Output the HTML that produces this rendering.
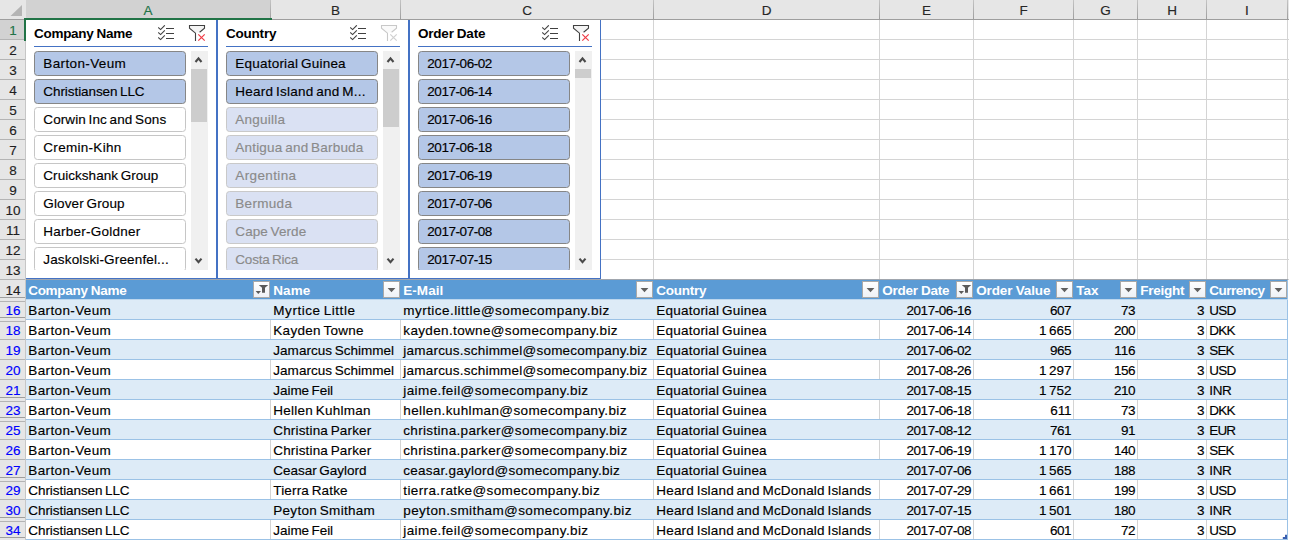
<!DOCTYPE html>
<html lang="en"><head><meta charset="utf-8"><title>Slicers</title>
<style>
html,body{margin:0;padding:0}
body{width:1289px;height:540px;position:relative;overflow:hidden;background:#fff;font-family:"Liberation Sans",sans-serif;font-size:13.5px;color:#000}
#g div,#g svg,#t span{position:absolute;display:block}
#t span{line-height:20px;height:20px;white-space:pre;word-spacing:-1.2px;-webkit-text-stroke:0.15px}
</style></head><body>
<div id="g">
<div style="left:26px;top:39px;width:1263px;height:1px;background:#d4d4d4;"></div>
<div style="left:26px;top:59px;width:1263px;height:1px;background:#d4d4d4;"></div>
<div style="left:26px;top:79px;width:1263px;height:1px;background:#d4d4d4;"></div>
<div style="left:26px;top:99px;width:1263px;height:1px;background:#d4d4d4;"></div>
<div style="left:26px;top:119px;width:1263px;height:1px;background:#d4d4d4;"></div>
<div style="left:26px;top:139px;width:1263px;height:1px;background:#d4d4d4;"></div>
<div style="left:26px;top:159px;width:1263px;height:1px;background:#d4d4d4;"></div>
<div style="left:26px;top:179px;width:1263px;height:1px;background:#d4d4d4;"></div>
<div style="left:26px;top:199px;width:1263px;height:1px;background:#d4d4d4;"></div>
<div style="left:26px;top:219px;width:1263px;height:1px;background:#d4d4d4;"></div>
<div style="left:26px;top:239px;width:1263px;height:1px;background:#d4d4d4;"></div>
<div style="left:26px;top:259px;width:1263px;height:1px;background:#d4d4d4;"></div>
<div style="left:26px;top:279px;width:1263px;height:1px;background:#d4d4d4;"></div>
<div style="left:270px;top:20px;width:1px;height:260px;background:#d4d4d4;"></div>
<div style="left:400px;top:20px;width:1px;height:260px;background:#d4d4d4;"></div>
<div style="left:653px;top:20px;width:1px;height:260px;background:#d4d4d4;"></div>
<div style="left:879px;top:20px;width:1px;height:260px;background:#d4d4d4;"></div>
<div style="left:973px;top:20px;width:1px;height:260px;background:#d4d4d4;"></div>
<div style="left:1073px;top:20px;width:1px;height:260px;background:#d4d4d4;"></div>
<div style="left:1137px;top:20px;width:1px;height:260px;background:#d4d4d4;"></div>
<div style="left:1206px;top:20px;width:1px;height:260px;background:#d4d4d4;"></div>
<div style="left:1287px;top:20px;width:1px;height:260px;background:#d4d4d4;"></div>
<div style="left:0px;top:0px;width:1289px;height:19px;background:#e6e6e6;"></div>
<div style="left:0px;top:19px;width:1289px;height:1px;background:#9e9e9e;"></div>
<div style="left:26px;top:0px;width:245px;height:18px;background:#d2d2d2;"></div>
<div style="left:270px;top:0px;width:1px;height:20px;background:linear-gradient(#c4c4c4,#9c9c9c);"></div>
<div style="left:400px;top:0px;width:1px;height:20px;background:linear-gradient(#c4c4c4,#9c9c9c);"></div>
<div style="left:653px;top:0px;width:1px;height:20px;background:linear-gradient(#c4c4c4,#9c9c9c);"></div>
<div style="left:879px;top:0px;width:1px;height:20px;background:linear-gradient(#c4c4c4,#9c9c9c);"></div>
<div style="left:973px;top:0px;width:1px;height:20px;background:linear-gradient(#c4c4c4,#9c9c9c);"></div>
<div style="left:1073px;top:0px;width:1px;height:20px;background:linear-gradient(#c4c4c4,#9c9c9c);"></div>
<div style="left:1137px;top:0px;width:1px;height:20px;background:linear-gradient(#c4c4c4,#9c9c9c);"></div>
<div style="left:1206px;top:0px;width:1px;height:20px;background:linear-gradient(#c4c4c4,#9c9c9c);"></div>
<div style="left:1287px;top:0px;width:1px;height:20px;background:linear-gradient(#c4c4c4,#9c9c9c);"></div>
<svg style="left:9px;top:4px" width="14" height="13" viewBox="0 0 14 13"><path d="M13 1 L13 12 L1.5 12 Z" fill="#b4b4b4"/></svg>
<div style="left:0px;top:20px;width:25px;height:520px;background:#e6e6e6;"></div>
<div style="left:25px;top:20px;width:1px;height:520px;background:#c6c6c6;"></div>
<div style="left:0px;top:20px;width:25px;height:19px;background:#d2d2d2;"></div>
<div style="left:0px;top:39px;width:25px;height:1px;background:#b4b4b4;"></div>
<div style="left:0px;top:59px;width:25px;height:1px;background:#b4b4b4;"></div>
<div style="left:0px;top:79px;width:25px;height:1px;background:#b4b4b4;"></div>
<div style="left:0px;top:99px;width:25px;height:1px;background:#b4b4b4;"></div>
<div style="left:0px;top:119px;width:25px;height:1px;background:#b4b4b4;"></div>
<div style="left:0px;top:139px;width:25px;height:1px;background:#b4b4b4;"></div>
<div style="left:0px;top:159px;width:25px;height:1px;background:#b4b4b4;"></div>
<div style="left:0px;top:179px;width:25px;height:1px;background:#b4b4b4;"></div>
<div style="left:0px;top:199px;width:25px;height:1px;background:#b4b4b4;"></div>
<div style="left:0px;top:219px;width:25px;height:1px;background:#b4b4b4;"></div>
<div style="left:0px;top:239px;width:25px;height:1px;background:#b4b4b4;"></div>
<div style="left:0px;top:259px;width:25px;height:1px;background:#b4b4b4;"></div>
<div style="left:0px;top:279px;width:25px;height:1px;background:#b4b4b4;"></div>
<div style="left:0px;top:297px;width:25px;height:1px;background:#9e9e9e;"></div>
<div style="left:0px;top:301px;width:25px;height:1px;background:#b4b4b4;"></div>
<div style="left:0px;top:317px;width:25px;height:1px;background:#9e9e9e;"></div>
<div style="left:0px;top:321px;width:25px;height:1px;background:#b4b4b4;"></div>
<div style="left:0px;top:339px;width:25px;height:1px;background:#b4b4b4;"></div>
<div style="left:0px;top:359px;width:25px;height:1px;background:#b4b4b4;"></div>
<div style="left:0px;top:379px;width:25px;height:1px;background:#b4b4b4;"></div>
<div style="left:0px;top:397px;width:25px;height:1px;background:#9e9e9e;"></div>
<div style="left:0px;top:401px;width:25px;height:1px;background:#b4b4b4;"></div>
<div style="left:0px;top:417px;width:25px;height:1px;background:#9e9e9e;"></div>
<div style="left:0px;top:421px;width:25px;height:1px;background:#b4b4b4;"></div>
<div style="left:0px;top:439px;width:25px;height:1px;background:#b4b4b4;"></div>
<div style="left:0px;top:459px;width:25px;height:1px;background:#b4b4b4;"></div>
<div style="left:0px;top:477px;width:25px;height:1px;background:#9e9e9e;"></div>
<div style="left:0px;top:481px;width:25px;height:1px;background:#b4b4b4;"></div>
<div style="left:0px;top:499px;width:25px;height:1px;background:#b4b4b4;"></div>
<div style="left:0px;top:517px;width:25px;height:1px;background:#9e9e9e;"></div>
<div style="left:0px;top:521px;width:25px;height:1px;background:#b4b4b4;"></div>
<div style="left:0px;top:537px;width:25px;height:1px;background:#9e9e9e;"></div>
<div style="left:0px;top:541px;width:25px;height:1px;background:#b4b4b4;"></div>
<div style="left:24px;top:18px;width:248px;height:2px;background:#217346;"></div>
<div style="left:24px;top:18px;width:2px;height:23px;background:#217346;"></div>
<div style="left:26px;top:20px;width:190px;height:258px;background:#fff;"></div>
<div style="left:216px;top:20px;width:1px;height:259px;background:#4472c4;"></div>
<div style="left:26px;top:278px;width:191px;height:1px;background:#4472c4;"></div>
<div style="left:34px;top:46px;width:174px;height:1px;background:#4472c4;"></div>
<svg style="left:158px;top:25px" width="17" height="16" viewBox="0 0 17 16"><path d="M0.2 2.5 L2.6 4.6 L6.8 0.30000000000000027" fill="none" stroke="#404040" stroke-width="1.1"/><rect x="8" y="3" width="8" height="1" fill="#404040"/><path d="M0.2 7.5 L2.6 9.6 L6.8 5.300000000000001" fill="none" stroke="#404040" stroke-width="1.1"/><rect x="8" y="8" width="8" height="1" fill="#404040"/><path d="M0.2 12.5 L2.6 14.6 L6.8 10.299999999999999" fill="none" stroke="#404040" stroke-width="1.1"/><rect x="8" y="13" width="8" height="1" fill="#404040"/></svg>
<svg style="left:188px;top:24px" width="18" height="18" viewBox="0 0 18 18"><path d="M1.5 1.5 L16.5 1.5 L16.5 4 L11 8.6 L7.5 8.6 L1.5 4 Z" fill="#f4f4f4" stroke="none"/><path d="M7.5 17 L7.5 9.2 L1.5 4.2 L1.5 1.5 L16.5 1.5 L16.5 4.2 L11.6 8.2" fill="none" stroke="#404040" stroke-width="1.1"/><path d="M10.3 10.3 L16.7 16.7 M16.7 10.3 L10.3 16.7" fill="none" stroke="#f03c46" stroke-width="1.2"/></svg>
<div style="left:191px;top:51px;width:17px;height:219px;background:#f0f0f0;"></div>
<div style="left:191px;top:69px;width:16px;height:53px;background:#cdcdcd;"></div>
<svg style="left:194px;top:56px" width="9" height="8" viewBox="0 0 9 8"><path d="M1.5 6 L4.5 2.4 L7.5 6" fill="none" stroke="#4a4a4a" stroke-width="2.1"/></svg>
<svg style="left:194px;top:257px" width="9" height="8" viewBox="0 0 9 8"><path d="M1.5 1.6 L4.5 5.2 L7.5 1.6" fill="none" stroke="#4a4a4a" stroke-width="2.1"/></svg>
<div style="left:34px;top:51px;width:150px;height:23px;background:#b4c7e7;border:1px solid #868686;border-radius:3.5px"></div>
<div style="left:34px;top:79px;width:150px;height:23px;background:#b4c7e7;border:1px solid #868686;border-radius:3.5px"></div>
<div style="left:34px;top:107px;width:150px;height:23px;background:#ffffff;border:1px solid #c6c6c6;border-radius:3.5px"></div>
<div style="left:34px;top:135px;width:150px;height:23px;background:#ffffff;border:1px solid #c6c6c6;border-radius:3.5px"></div>
<div style="left:34px;top:163px;width:150px;height:23px;background:#ffffff;border:1px solid #c6c6c6;border-radius:3.5px"></div>
<div style="left:34px;top:191px;width:150px;height:23px;background:#ffffff;border:1px solid #c6c6c6;border-radius:3.5px"></div>
<div style="left:34px;top:219px;width:150px;height:23px;background:#ffffff;border:1px solid #c6c6c6;border-radius:3.5px"></div>
<div style="left:34px;top:247px;width:152px;height:23px;overflow:hidden"><div style="left:0;top:0;width:150px;height:23px;background:#ffffff;border:1px solid #c6c6c6;border-radius:3.5px"></div></div>
<div style="left:218px;top:20px;width:190px;height:258px;background:#fff;"></div>
<div style="left:217px;top:20px;width:1px;height:259px;background:#4472c4;"></div>
<div style="left:408px;top:20px;width:1px;height:259px;background:#4472c4;"></div>
<div style="left:217px;top:278px;width:192px;height:1px;background:#4472c4;"></div>
<div style="left:226px;top:46px;width:174px;height:1px;background:#4472c4;"></div>
<svg style="left:350px;top:25px" width="17" height="16" viewBox="0 0 17 16"><path d="M0.2 2.5 L2.6 4.6 L6.8 0.30000000000000027" fill="none" stroke="#404040" stroke-width="1.1"/><rect x="8" y="3" width="8" height="1" fill="#404040"/><path d="M0.2 7.5 L2.6 9.6 L6.8 5.300000000000001" fill="none" stroke="#404040" stroke-width="1.1"/><rect x="8" y="8" width="8" height="1" fill="#404040"/><path d="M0.2 12.5 L2.6 14.6 L6.8 10.299999999999999" fill="none" stroke="#404040" stroke-width="1.1"/><rect x="8" y="13" width="8" height="1" fill="#404040"/></svg>
<svg style="left:380px;top:24px" width="18" height="18" viewBox="0 0 18 18"><path d="M1.5 1.5 L16.5 1.5 L16.5 4 L11 8.6 L7.5 8.6 L1.5 4 Z" fill="#fafafa" stroke="none"/><path d="M7.5 17 L7.5 9.2 L1.5 4.2 L1.5 1.5 L16.5 1.5 L16.5 4.2 L11.6 8.2" fill="none" stroke="#c8c8c8" stroke-width="1.1"/><path d="M10.3 10.3 L16.7 16.7 M16.7 10.3 L10.3 16.7" fill="none" stroke="#d0d0d0" stroke-width="1.2"/></svg>
<div style="left:383px;top:51px;width:17px;height:219px;background:#f0f0f0;"></div>
<div style="left:383px;top:69px;width:16px;height:58px;background:#cdcdcd;"></div>
<svg style="left:386px;top:56px" width="9" height="8" viewBox="0 0 9 8"><path d="M1.5 6 L4.5 2.4 L7.5 6" fill="none" stroke="#4a4a4a" stroke-width="2.1"/></svg>
<svg style="left:386px;top:257px" width="9" height="8" viewBox="0 0 9 8"><path d="M1.5 1.6 L4.5 5.2 L7.5 1.6" fill="none" stroke="#4a4a4a" stroke-width="2.1"/></svg>
<div style="left:226px;top:51px;width:150px;height:23px;background:#b4c7e7;border:1px solid #868686;border-radius:3.5px"></div>
<div style="left:226px;top:79px;width:150px;height:23px;background:#b4c7e7;border:1px solid #868686;border-radius:3.5px"></div>
<div style="left:226px;top:107px;width:150px;height:23px;background:#dae1f3;border:1px solid #c9c9c9;border-radius:3.5px"></div>
<div style="left:226px;top:135px;width:150px;height:23px;background:#dae1f3;border:1px solid #c9c9c9;border-radius:3.5px"></div>
<div style="left:226px;top:163px;width:150px;height:23px;background:#dae1f3;border:1px solid #c9c9c9;border-radius:3.5px"></div>
<div style="left:226px;top:191px;width:150px;height:23px;background:#dae1f3;border:1px solid #c9c9c9;border-radius:3.5px"></div>
<div style="left:226px;top:219px;width:150px;height:23px;background:#dae1f3;border:1px solid #c9c9c9;border-radius:3.5px"></div>
<div style="left:226px;top:247px;width:152px;height:23px;overflow:hidden"><div style="left:0;top:0;width:150px;height:23px;background:#dae1f3;border:1px solid #c9c9c9;border-radius:3.5px"></div></div>
<div style="left:410px;top:20px;width:190px;height:258px;background:#fff;"></div>
<div style="left:409px;top:20px;width:1px;height:259px;background:#4472c4;"></div>
<div style="left:600px;top:20px;width:1px;height:259px;background:#4472c4;"></div>
<div style="left:409px;top:278px;width:192px;height:1px;background:#4472c4;"></div>
<div style="left:418px;top:46px;width:174px;height:1px;background:#4472c4;"></div>
<svg style="left:542px;top:25px" width="17" height="16" viewBox="0 0 17 16"><path d="M0.2 2.5 L2.6 4.6 L6.8 0.30000000000000027" fill="none" stroke="#404040" stroke-width="1.1"/><rect x="8" y="3" width="8" height="1" fill="#404040"/><path d="M0.2 7.5 L2.6 9.6 L6.8 5.300000000000001" fill="none" stroke="#404040" stroke-width="1.1"/><rect x="8" y="8" width="8" height="1" fill="#404040"/><path d="M0.2 12.5 L2.6 14.6 L6.8 10.299999999999999" fill="none" stroke="#404040" stroke-width="1.1"/><rect x="8" y="13" width="8" height="1" fill="#404040"/></svg>
<svg style="left:572px;top:24px" width="18" height="18" viewBox="0 0 18 18"><path d="M1.5 1.5 L16.5 1.5 L16.5 4 L11 8.6 L7.5 8.6 L1.5 4 Z" fill="#f4f4f4" stroke="none"/><path d="M7.5 17 L7.5 9.2 L1.5 4.2 L1.5 1.5 L16.5 1.5 L16.5 4.2 L11.6 8.2" fill="none" stroke="#404040" stroke-width="1.1"/><path d="M10.3 10.3 L16.7 16.7 M16.7 10.3 L10.3 16.7" fill="none" stroke="#f03c46" stroke-width="1.2"/></svg>
<div style="left:575px;top:51px;width:17px;height:219px;background:#f0f0f0;"></div>
<div style="left:575px;top:69px;width:16px;height:9px;background:#cdcdcd;"></div>
<svg style="left:578px;top:56px" width="9" height="8" viewBox="0 0 9 8"><path d="M1.5 6 L4.5 2.4 L7.5 6" fill="none" stroke="#4a4a4a" stroke-width="2.1"/></svg>
<svg style="left:578px;top:257px" width="9" height="8" viewBox="0 0 9 8"><path d="M1.5 1.6 L4.5 5.2 L7.5 1.6" fill="none" stroke="#4a4a4a" stroke-width="2.1"/></svg>
<div style="left:418px;top:51px;width:150px;height:23px;background:#b4c7e7;border:1px solid #868686;border-radius:3.5px"></div>
<div style="left:418px;top:79px;width:150px;height:23px;background:#b4c7e7;border:1px solid #868686;border-radius:3.5px"></div>
<div style="left:418px;top:107px;width:150px;height:23px;background:#b4c7e7;border:1px solid #868686;border-radius:3.5px"></div>
<div style="left:418px;top:135px;width:150px;height:23px;background:#b4c7e7;border:1px solid #868686;border-radius:3.5px"></div>
<div style="left:418px;top:163px;width:150px;height:23px;background:#b4c7e7;border:1px solid #868686;border-radius:3.5px"></div>
<div style="left:418px;top:191px;width:150px;height:23px;background:#b4c7e7;border:1px solid #868686;border-radius:3.5px"></div>
<div style="left:418px;top:219px;width:150px;height:23px;background:#b4c7e7;border:1px solid #868686;border-radius:3.5px"></div>
<div style="left:418px;top:247px;width:152px;height:23px;overflow:hidden"><div style="left:0;top:0;width:150px;height:23px;background:#b4c7e7;border:1px solid #868686;border-radius:3.5px"></div></div>
<div style="left:26px;top:279px;width:1262px;height:1px;background:#a0a6ae;"></div>
<div style="left:26px;top:280px;width:1262px;height:19px;background:#5b9bd5;"></div>
<svg style="left:253px;top:281px" width="17" height="17" viewBox="0 0 17 17"><defs><linearGradient id="g253" x1="0" y1="0" x2="0" y2="1"><stop offset="0" stop-color="#ffffff"/><stop offset="1" stop-color="#eef1f6"/></linearGradient></defs><rect x="0.5" y="0.5" width="16" height="16" fill="url(#g253)" stroke="#a9a9a9"/><path d="M5.8 4 L15.2 4 L12 6.8 L12 11.7 L9 11.7 L9 6.8 Z" fill="#5a5a5a"/><path d="M2.6 10 L8 10 L5.3 13 Z" fill="#5a5a5a"/></svg>
<svg style="left:383px;top:281px" width="17" height="17" viewBox="0 0 17 17"><defs><linearGradient id="g383" x1="0" y1="0" x2="0" y2="1"><stop offset="0" stop-color="#ffffff"/><stop offset="1" stop-color="#eef1f6"/></linearGradient></defs><rect x="0.5" y="0.5" width="16" height="16" fill="url(#g383)" stroke="#a9a9a9"/><path d="M4.6 7 L12.4 7 L8.5 11.2 Z" fill="#606060"/></svg>
<svg style="left:636px;top:281px" width="17" height="17" viewBox="0 0 17 17"><defs><linearGradient id="g636" x1="0" y1="0" x2="0" y2="1"><stop offset="0" stop-color="#ffffff"/><stop offset="1" stop-color="#eef1f6"/></linearGradient></defs><rect x="0.5" y="0.5" width="16" height="16" fill="url(#g636)" stroke="#a9a9a9"/><path d="M4.6 7 L12.4 7 L8.5 11.2 Z" fill="#606060"/></svg>
<svg style="left:862px;top:281px" width="17" height="17" viewBox="0 0 17 17"><defs><linearGradient id="g862" x1="0" y1="0" x2="0" y2="1"><stop offset="0" stop-color="#ffffff"/><stop offset="1" stop-color="#eef1f6"/></linearGradient></defs><rect x="0.5" y="0.5" width="16" height="16" fill="url(#g862)" stroke="#a9a9a9"/><path d="M4.6 7 L12.4 7 L8.5 11.2 Z" fill="#606060"/></svg>
<svg style="left:956px;top:281px" width="17" height="17" viewBox="0 0 17 17"><defs><linearGradient id="g956" x1="0" y1="0" x2="0" y2="1"><stop offset="0" stop-color="#ffffff"/><stop offset="1" stop-color="#eef1f6"/></linearGradient></defs><rect x="0.5" y="0.5" width="16" height="16" fill="url(#g956)" stroke="#a9a9a9"/><path d="M5.8 4 L15.2 4 L12 6.8 L12 11.7 L9 11.7 L9 6.8 Z" fill="#5a5a5a"/><path d="M2.6 10 L8 10 L5.3 13 Z" fill="#5a5a5a"/></svg>
<svg style="left:1056px;top:281px" width="17" height="17" viewBox="0 0 17 17"><defs><linearGradient id="g1056" x1="0" y1="0" x2="0" y2="1"><stop offset="0" stop-color="#ffffff"/><stop offset="1" stop-color="#eef1f6"/></linearGradient></defs><rect x="0.5" y="0.5" width="16" height="16" fill="url(#g1056)" stroke="#a9a9a9"/><path d="M4.6 7 L12.4 7 L8.5 11.2 Z" fill="#606060"/></svg>
<svg style="left:1120px;top:281px" width="17" height="17" viewBox="0 0 17 17"><defs><linearGradient id="g1120" x1="0" y1="0" x2="0" y2="1"><stop offset="0" stop-color="#ffffff"/><stop offset="1" stop-color="#eef1f6"/></linearGradient></defs><rect x="0.5" y="0.5" width="16" height="16" fill="url(#g1120)" stroke="#a9a9a9"/><path d="M4.6 7 L12.4 7 L8.5 11.2 Z" fill="#606060"/></svg>
<svg style="left:1189px;top:281px" width="17" height="17" viewBox="0 0 17 17"><defs><linearGradient id="g1189" x1="0" y1="0" x2="0" y2="1"><stop offset="0" stop-color="#ffffff"/><stop offset="1" stop-color="#eef1f6"/></linearGradient></defs><rect x="0.5" y="0.5" width="16" height="16" fill="url(#g1189)" stroke="#a9a9a9"/><path d="M4.6 7 L12.4 7 L8.5 11.2 Z" fill="#606060"/></svg>
<svg style="left:1270px;top:281px" width="17" height="17" viewBox="0 0 17 17"><defs><linearGradient id="g1270" x1="0" y1="0" x2="0" y2="1"><stop offset="0" stop-color="#ffffff"/><stop offset="1" stop-color="#eef1f6"/></linearGradient></defs><rect x="0.5" y="0.5" width="16" height="16" fill="url(#g1270)" stroke="#a9a9a9"/><path d="M4.6 7 L12.4 7 L8.5 11.2 Z" fill="#606060"/></svg>
<div style="left:26px;top:299px;width:1262px;height:1px;background:#9bc2e6;"></div>
<div style="left:26px;top:300px;width:1262px;height:19px;background:#ddebf7;"></div>
<div style="left:26px;top:319px;width:1262px;height:1px;background:#9bc2e6;"></div>
<div style="left:270px;top:320px;width:1px;height:19px;background:#d4d4d4;"></div>
<div style="left:400px;top:320px;width:1px;height:19px;background:#d4d4d4;"></div>
<div style="left:653px;top:320px;width:1px;height:19px;background:#d4d4d4;"></div>
<div style="left:879px;top:320px;width:1px;height:19px;background:#d4d4d4;"></div>
<div style="left:973px;top:320px;width:1px;height:19px;background:#d4d4d4;"></div>
<div style="left:1073px;top:320px;width:1px;height:19px;background:#d4d4d4;"></div>
<div style="left:1137px;top:320px;width:1px;height:19px;background:#d4d4d4;"></div>
<div style="left:1206px;top:320px;width:1px;height:19px;background:#d4d4d4;"></div>
<div style="left:26px;top:339px;width:1262px;height:1px;background:#9bc2e6;"></div>
<div style="left:26px;top:340px;width:1262px;height:19px;background:#ddebf7;"></div>
<div style="left:26px;top:359px;width:1262px;height:1px;background:#9bc2e6;"></div>
<div style="left:270px;top:360px;width:1px;height:19px;background:#d4d4d4;"></div>
<div style="left:400px;top:360px;width:1px;height:19px;background:#d4d4d4;"></div>
<div style="left:653px;top:360px;width:1px;height:19px;background:#d4d4d4;"></div>
<div style="left:879px;top:360px;width:1px;height:19px;background:#d4d4d4;"></div>
<div style="left:973px;top:360px;width:1px;height:19px;background:#d4d4d4;"></div>
<div style="left:1073px;top:360px;width:1px;height:19px;background:#d4d4d4;"></div>
<div style="left:1137px;top:360px;width:1px;height:19px;background:#d4d4d4;"></div>
<div style="left:1206px;top:360px;width:1px;height:19px;background:#d4d4d4;"></div>
<div style="left:26px;top:379px;width:1262px;height:1px;background:#9bc2e6;"></div>
<div style="left:26px;top:380px;width:1262px;height:19px;background:#ddebf7;"></div>
<div style="left:26px;top:399px;width:1262px;height:1px;background:#9bc2e6;"></div>
<div style="left:270px;top:400px;width:1px;height:19px;background:#d4d4d4;"></div>
<div style="left:400px;top:400px;width:1px;height:19px;background:#d4d4d4;"></div>
<div style="left:653px;top:400px;width:1px;height:19px;background:#d4d4d4;"></div>
<div style="left:879px;top:400px;width:1px;height:19px;background:#d4d4d4;"></div>
<div style="left:973px;top:400px;width:1px;height:19px;background:#d4d4d4;"></div>
<div style="left:1073px;top:400px;width:1px;height:19px;background:#d4d4d4;"></div>
<div style="left:1137px;top:400px;width:1px;height:19px;background:#d4d4d4;"></div>
<div style="left:1206px;top:400px;width:1px;height:19px;background:#d4d4d4;"></div>
<div style="left:26px;top:419px;width:1262px;height:1px;background:#9bc2e6;"></div>
<div style="left:26px;top:420px;width:1262px;height:19px;background:#ddebf7;"></div>
<div style="left:26px;top:439px;width:1262px;height:1px;background:#9bc2e6;"></div>
<div style="left:270px;top:440px;width:1px;height:19px;background:#d4d4d4;"></div>
<div style="left:400px;top:440px;width:1px;height:19px;background:#d4d4d4;"></div>
<div style="left:653px;top:440px;width:1px;height:19px;background:#d4d4d4;"></div>
<div style="left:879px;top:440px;width:1px;height:19px;background:#d4d4d4;"></div>
<div style="left:973px;top:440px;width:1px;height:19px;background:#d4d4d4;"></div>
<div style="left:1073px;top:440px;width:1px;height:19px;background:#d4d4d4;"></div>
<div style="left:1137px;top:440px;width:1px;height:19px;background:#d4d4d4;"></div>
<div style="left:1206px;top:440px;width:1px;height:19px;background:#d4d4d4;"></div>
<div style="left:26px;top:459px;width:1262px;height:1px;background:#9bc2e6;"></div>
<div style="left:26px;top:460px;width:1262px;height:19px;background:#ddebf7;"></div>
<div style="left:26px;top:479px;width:1262px;height:1px;background:#9bc2e6;"></div>
<div style="left:270px;top:480px;width:1px;height:19px;background:#d4d4d4;"></div>
<div style="left:400px;top:480px;width:1px;height:19px;background:#d4d4d4;"></div>
<div style="left:653px;top:480px;width:1px;height:19px;background:#d4d4d4;"></div>
<div style="left:879px;top:480px;width:1px;height:19px;background:#d4d4d4;"></div>
<div style="left:973px;top:480px;width:1px;height:19px;background:#d4d4d4;"></div>
<div style="left:1073px;top:480px;width:1px;height:19px;background:#d4d4d4;"></div>
<div style="left:1137px;top:480px;width:1px;height:19px;background:#d4d4d4;"></div>
<div style="left:1206px;top:480px;width:1px;height:19px;background:#d4d4d4;"></div>
<div style="left:26px;top:499px;width:1262px;height:1px;background:#9bc2e6;"></div>
<div style="left:26px;top:500px;width:1262px;height:19px;background:#ddebf7;"></div>
<div style="left:26px;top:519px;width:1262px;height:1px;background:#9bc2e6;"></div>
<div style="left:270px;top:520px;width:1px;height:19px;background:#d4d4d4;"></div>
<div style="left:400px;top:520px;width:1px;height:19px;background:#d4d4d4;"></div>
<div style="left:653px;top:520px;width:1px;height:19px;background:#d4d4d4;"></div>
<div style="left:879px;top:520px;width:1px;height:19px;background:#d4d4d4;"></div>
<div style="left:973px;top:520px;width:1px;height:19px;background:#d4d4d4;"></div>
<div style="left:1073px;top:520px;width:1px;height:19px;background:#d4d4d4;"></div>
<div style="left:1137px;top:520px;width:1px;height:19px;background:#d4d4d4;"></div>
<div style="left:1206px;top:520px;width:1px;height:19px;background:#d4d4d4;"></div>
<div style="left:26px;top:539px;width:1262px;height:1px;background:#9bc2e6;"></div>
<div style="left:1287px;top:280px;width:1px;height:260px;background:#9bc2e6;"></div>
<div style="left:26px;top:299px;width:1262px;height:1px;background:#bdd7ee;"></div>
<svg style="left:1282px;top:534px" width="5" height="5" viewBox="0 0 5 5"><path d="M4 0.8 L4 4 L0.8 4" fill="none" stroke="#3a5fb0" stroke-width="2"/></svg>
</div>
<div id="t">
<span style="top:1px;left:98px;width:100px;text-align:center;color:#217346;">A</span>
<span style="top:1px;left:285.5px;width:100px;text-align:center;color:#262626;">B</span>
<span style="top:1px;left:477px;width:100px;text-align:center;color:#262626;">C</span>
<span style="top:1px;left:716.5px;width:100px;text-align:center;color:#262626;">D</span>
<span style="top:1px;left:876.5px;width:100px;text-align:center;color:#262626;">E</span>
<span style="top:1px;left:973.5px;width:100px;text-align:center;color:#262626;">F</span>
<span style="top:1px;left:1055.5px;width:100px;text-align:center;color:#262626;">G</span>
<span style="top:1px;left:1122px;width:100px;text-align:center;color:#262626;">H</span>
<span style="top:1px;left:1197px;width:100px;text-align:center;color:#262626;">I</span>
<span style="top:21px;left:-37px;width:100px;text-align:center;color:#217346;">1</span>
<span style="top:41px;left:-37px;width:100px;text-align:center;color:#1e1e1e;">2</span>
<span style="top:61px;left:-37px;width:100px;text-align:center;color:#1e1e1e;">3</span>
<span style="top:81px;left:-37px;width:100px;text-align:center;color:#1e1e1e;">4</span>
<span style="top:101px;left:-37px;width:100px;text-align:center;color:#1e1e1e;">5</span>
<span style="top:121px;left:-37px;width:100px;text-align:center;color:#1e1e1e;">6</span>
<span style="top:141px;left:-37px;width:100px;text-align:center;color:#1e1e1e;">7</span>
<span style="top:161px;left:-37px;width:100px;text-align:center;color:#1e1e1e;">8</span>
<span style="top:181px;left:-37px;width:100px;text-align:center;color:#1e1e1e;">9</span>
<span style="top:201px;left:-37px;width:100px;text-align:center;color:#1e1e1e;">10</span>
<span style="top:221px;left:-37px;width:100px;text-align:center;color:#1e1e1e;">11</span>
<span style="top:241px;left:-37px;width:100px;text-align:center;color:#1e1e1e;">12</span>
<span style="top:261px;left:-37px;width:100px;text-align:center;color:#1e1e1e;">13</span>
<span style="top:281px;left:-37px;width:100px;text-align:center;color:#1e1e1e;">14</span>
<span style="top:301px;left:-37px;width:100px;text-align:center;color:#0000ff;">16</span>
<span style="top:321px;left:-37px;width:100px;text-align:center;color:#0000ff;">18</span>
<span style="top:341px;left:-37px;width:100px;text-align:center;color:#0000ff;">19</span>
<span style="top:361px;left:-37px;width:100px;text-align:center;color:#0000ff;">20</span>
<span style="top:381px;left:-37px;width:100px;text-align:center;color:#0000ff;">21</span>
<span style="top:401px;left:-37px;width:100px;text-align:center;color:#0000ff;">23</span>
<span style="top:421px;left:-37px;width:100px;text-align:center;color:#0000ff;">25</span>
<span style="top:441px;left:-37px;width:100px;text-align:center;color:#0000ff;">26</span>
<span style="top:461px;left:-37px;width:100px;text-align:center;color:#0000ff;">27</span>
<span style="top:481px;left:-37px;width:100px;text-align:center;color:#0000ff;">29</span>
<span style="top:501px;left:-37px;width:100px;text-align:center;color:#0000ff;">30</span>
<span style="top:521px;left:-37px;width:100px;text-align:center;color:#0000ff;">34</span>
<span style="top:24px;left:34px;letter-spacing:-0.287px;font-weight:700;-webkit-text-stroke:0;word-spacing:-0.4px;">Company Name</span>
<span style="top:54px;left:43.3px;letter-spacing:0.377px;">Barton-Veum</span>
<span style="top:82px;left:43.3px;letter-spacing:-0.070px;">Christiansen LLC</span>
<span style="top:110px;left:43.3px;letter-spacing:0.104px;">Corwin Inc and Sons</span>
<span style="top:138px;left:43.3px;letter-spacing:0.292px;">Cremin-Kihn</span>
<span style="top:166px;left:43.3px;letter-spacing:0.046px;">Cruickshank Group</span>
<span style="top:194px;left:43.3px;letter-spacing:0.133px;">Glover Group</span>
<span style="top:222px;left:43.3px;letter-spacing:0.239px;">Harber-Goldner</span>
<span style="top:250px;left:43.3px;letter-spacing:0.154px;">Jaskolski-Greenfel...</span>
<span style="top:24px;left:226px;letter-spacing:-0.221px;font-weight:700;-webkit-text-stroke:0;word-spacing:-0.4px;">Country</span>
<span style="top:54px;left:235.3px;letter-spacing:0.216px;">Equatorial Guinea</span>
<span style="top:82px;left:235.3px;letter-spacing:0.237px;">Heard Island and M...</span>
<span style="top:110px;left:235.3px;letter-spacing:0.252px;color:#8a8a8a;">Anguilla</span>
<span style="top:138px;left:235.3px;letter-spacing:0.199px;color:#8a8a8a;">Antigua and Barbuda</span>
<span style="top:166px;left:235.3px;letter-spacing:0.370px;color:#8a8a8a;">Argentina</span>
<span style="top:194px;left:235.3px;letter-spacing:0.313px;color:#8a8a8a;">Bermuda</span>
<span style="top:222px;left:235.3px;letter-spacing:0.088px;color:#8a8a8a;">Cape Verde</span>
<span style="top:250px;left:235.3px;letter-spacing:-0.198px;color:#8a8a8a;">Costa Rica</span>
<span style="top:24px;left:418px;letter-spacing:-0.217px;font-weight:700;-webkit-text-stroke:0;word-spacing:-0.4px;">Order Date</span>
<span style="top:54px;left:427.3px;letter-spacing:-0.446px;">2017-06-02</span>
<span style="top:82px;left:427.3px;letter-spacing:-0.446px;">2017-06-14</span>
<span style="top:110px;left:427.3px;letter-spacing:-0.446px;">2017-06-16</span>
<span style="top:138px;left:427.3px;letter-spacing:-0.446px;">2017-06-18</span>
<span style="top:166px;left:427.3px;letter-spacing:-0.446px;">2017-06-19</span>
<span style="top:194px;left:427.3px;letter-spacing:-0.446px;">2017-07-06</span>
<span style="top:222px;left:427.3px;letter-spacing:-0.446px;">2017-07-08</span>
<span style="top:250px;left:427.3px;letter-spacing:-0.446px;">2017-07-15</span>
<span style="top:281px;left:28.2px;letter-spacing:-0.287px;font-weight:700;-webkit-text-stroke:0;word-spacing:-0.4px;color:#fff;">Company Name</span>
<span style="top:281px;left:273.2px;letter-spacing:0.105px;font-weight:700;-webkit-text-stroke:0;word-spacing:-0.4px;color:#fff;">Name</span>
<span style="top:281px;left:403.2px;letter-spacing:0.072px;font-weight:700;-webkit-text-stroke:0;word-spacing:-0.4px;color:#fff;">E-Mail</span>
<span style="top:281px;left:656.2px;letter-spacing:-0.221px;font-weight:700;-webkit-text-stroke:0;word-spacing:-0.4px;color:#fff;">Country</span>
<span style="top:281px;left:882.2px;letter-spacing:-0.217px;font-weight:700;-webkit-text-stroke:0;word-spacing:-0.4px;color:#fff;">Order Date</span>
<span style="top:281px;left:976.2px;letter-spacing:-0.108px;font-weight:700;-webkit-text-stroke:0;word-spacing:-0.4px;color:#fff;">Order Value</span>
<span style="top:281px;left:1076.2px;letter-spacing:-0.022px;font-weight:700;-webkit-text-stroke:0;word-spacing:-0.4px;color:#fff;">Tax</span>
<span style="top:281px;left:1140.2px;letter-spacing:-0.221px;font-weight:700;-webkit-text-stroke:0;word-spacing:-0.4px;color:#fff;">Freight</span>
<span style="top:281px;left:1209.2px;letter-spacing:-0.510px;font-weight:700;-webkit-text-stroke:0;word-spacing:-0.4px;color:#fff;">Currency</span>
<span style="top:301px;left:28.3px;letter-spacing:0.377px;">Barton-Veum</span>
<span style="top:301px;left:273.3px;letter-spacing:0.547px;">Myrtice Little</span>
<span style="top:301px;left:403.3px;letter-spacing:0.452px;">myrtice.little@somecompany.biz</span>
<span style="top:301px;left:656.3px;letter-spacing:0.216px;">Equatorial Guinea</span>
<span style="top:301px;right:317.95px;letter-spacing:-0.446px;">2017-06-16</span>
<span style="top:301px;right:218.01px;letter-spacing:-0.510px;">607</span>
<span style="top:301px;right:154.02px;letter-spacing:-0.516px;">73</span>
<span style="top:301px;right:84.50px;">3</span>
<span style="top:301px;left:1209.3px;letter-spacing:-0.740px;">USD</span>
<span style="top:321px;left:28.3px;letter-spacing:0.377px;">Barton-Veum</span>
<span style="top:321px;left:273.3px;letter-spacing:0.290px;">Kayden Towne</span>
<span style="top:321px;left:403.3px;letter-spacing:0.351px;">kayden.towne@somecompany.biz</span>
<span style="top:321px;left:656.3px;letter-spacing:0.216px;">Equatorial Guinea</span>
<span style="top:321px;right:317.95px;letter-spacing:-0.446px;">2017-06-14</span>
<span style="top:321px;right:217.50px;">1 665</span>
<span style="top:321px;right:154.01px;letter-spacing:-0.510px;">200</span>
<span style="top:321px;right:84.50px;">3</span>
<span style="top:321px;left:1209.3px;letter-spacing:-0.807px;">DKK</span>
<span style="top:341px;left:28.3px;letter-spacing:0.377px;">Barton-Veum</span>
<span style="top:341px;left:273.3px;letter-spacing:0.030px;">Jamarcus Schimmel</span>
<span style="top:341px;left:403.3px;letter-spacing:0.218px;">jamarcus.schimmel@somecompany.biz</span>
<span style="top:341px;left:656.3px;letter-spacing:0.216px;">Equatorial Guinea</span>
<span style="top:341px;right:317.95px;letter-spacing:-0.446px;">2017-06-02</span>
<span style="top:341px;right:218.01px;letter-spacing:-0.510px;">965</span>
<span style="top:341px;right:153.68px;letter-spacing:-0.177px;">116</span>
<span style="top:341px;right:84.50px;">3</span>
<span style="top:341px;left:1209.3px;letter-spacing:-0.900px;">SEK</span>
<span style="top:361px;left:28.3px;letter-spacing:0.377px;">Barton-Veum</span>
<span style="top:361px;left:273.3px;letter-spacing:0.030px;">Jamarcus Schimmel</span>
<span style="top:361px;left:403.3px;letter-spacing:0.218px;">jamarcus.schimmel@somecompany.biz</span>
<span style="top:361px;left:656.3px;letter-spacing:0.216px;">Equatorial Guinea</span>
<span style="top:361px;right:317.95px;letter-spacing:-0.446px;">2017-08-26</span>
<span style="top:361px;right:217.50px;">1 297</span>
<span style="top:361px;right:154.01px;letter-spacing:-0.510px;">156</span>
<span style="top:361px;right:84.50px;">3</span>
<span style="top:361px;left:1209.3px;letter-spacing:-0.740px;">USD</span>
<span style="top:381px;left:28.3px;letter-spacing:0.377px;">Barton-Veum</span>
<span style="top:381px;left:273.3px;letter-spacing:-0.055px;">Jaime Feil</span>
<span style="top:381px;left:403.3px;letter-spacing:0.402px;">jaime.feil@somecompany.biz</span>
<span style="top:381px;left:656.3px;letter-spacing:0.216px;">Equatorial Guinea</span>
<span style="top:381px;right:317.95px;letter-spacing:-0.446px;">2017-08-15</span>
<span style="top:381px;right:217.50px;">1 752</span>
<span style="top:381px;right:154.01px;letter-spacing:-0.510px;">210</span>
<span style="top:381px;right:84.50px;">3</span>
<span style="top:381px;left:1209.3px;letter-spacing:-0.394px;">INR</span>
<span style="top:401px;left:28.3px;letter-spacing:0.377px;">Barton-Veum</span>
<span style="top:401px;left:273.3px;letter-spacing:0.246px;">Hellen Kuhlman</span>
<span style="top:401px;left:403.3px;letter-spacing:0.374px;">hellen.kuhlman@somecompany.biz</span>
<span style="top:401px;left:656.3px;letter-spacing:0.216px;">Equatorial Guinea</span>
<span style="top:401px;right:317.95px;letter-spacing:-0.446px;">2017-06-18</span>
<span style="top:401px;right:217.68px;letter-spacing:-0.177px;">611</span>
<span style="top:401px;right:154.02px;letter-spacing:-0.516px;">73</span>
<span style="top:401px;right:84.50px;">3</span>
<span style="top:401px;left:1209.3px;letter-spacing:-0.807px;">DKK</span>
<span style="top:421px;left:28.3px;letter-spacing:0.377px;">Barton-Veum</span>
<span style="top:421px;left:273.3px;letter-spacing:0.157px;">Christina Parker</span>
<span style="top:421px;left:403.3px;letter-spacing:0.326px;">christina.parker@somecompany.biz</span>
<span style="top:421px;left:656.3px;letter-spacing:0.216px;">Equatorial Guinea</span>
<span style="top:421px;right:317.95px;letter-spacing:-0.446px;">2017-08-12</span>
<span style="top:421px;right:218.01px;letter-spacing:-0.510px;">761</span>
<span style="top:421px;right:154.02px;letter-spacing:-0.516px;">91</span>
<span style="top:421px;right:84.50px;">3</span>
<span style="top:421px;left:1209.3px;letter-spacing:-0.900px;">EUR</span>
<span style="top:441px;left:28.3px;letter-spacing:0.377px;">Barton-Veum</span>
<span style="top:441px;left:273.3px;letter-spacing:0.157px;">Christina Parker</span>
<span style="top:441px;left:403.3px;letter-spacing:0.326px;">christina.parker@somecompany.biz</span>
<span style="top:441px;left:656.3px;letter-spacing:0.216px;">Equatorial Guinea</span>
<span style="top:441px;right:317.95px;letter-spacing:-0.446px;">2017-06-19</span>
<span style="top:441px;right:217.50px;">1 170</span>
<span style="top:441px;right:154.01px;letter-spacing:-0.510px;">140</span>
<span style="top:441px;right:84.50px;">3</span>
<span style="top:441px;left:1209.3px;letter-spacing:-0.900px;">SEK</span>
<span style="top:461px;left:28.3px;letter-spacing:0.377px;">Barton-Veum</span>
<span style="top:461px;left:273.3px;letter-spacing:-0.010px;">Ceasar Gaylord</span>
<span style="top:461px;left:403.3px;letter-spacing:0.248px;">ceasar.gaylord@somecompany.biz</span>
<span style="top:461px;left:656.3px;letter-spacing:0.216px;">Equatorial Guinea</span>
<span style="top:461px;right:317.95px;letter-spacing:-0.446px;">2017-07-06</span>
<span style="top:461px;right:217.50px;">1 565</span>
<span style="top:461px;right:154.01px;letter-spacing:-0.510px;">188</span>
<span style="top:461px;right:84.50px;">3</span>
<span style="top:461px;left:1209.3px;letter-spacing:-0.394px;">INR</span>
<span style="top:481px;left:28.3px;letter-spacing:-0.070px;">Christiansen LLC</span>
<span style="top:481px;left:273.3px;letter-spacing:0.159px;">Tierra Ratke</span>
<span style="top:481px;left:403.3px;letter-spacing:0.386px;">tierra.ratke@somecompany.biz</span>
<span style="top:481px;left:656.3px;letter-spacing:0.187px;">Heard Island and McDonald Islands</span>
<span style="top:481px;right:317.95px;letter-spacing:-0.446px;">2017-07-29</span>
<span style="top:481px;right:217.50px;">1 661</span>
<span style="top:481px;right:154.01px;letter-spacing:-0.510px;">199</span>
<span style="top:481px;right:84.50px;">3</span>
<span style="top:481px;left:1209.3px;letter-spacing:-0.740px;">USD</span>
<span style="top:501px;left:28.3px;letter-spacing:-0.070px;">Christiansen LLC</span>
<span style="top:501px;left:273.3px;letter-spacing:0.280px;">Peyton Smitham</span>
<span style="top:501px;left:403.3px;letter-spacing:0.391px;">peyton.smitham@somecompany.biz</span>
<span style="top:501px;left:656.3px;letter-spacing:0.187px;">Heard Island and McDonald Islands</span>
<span style="top:501px;right:317.95px;letter-spacing:-0.446px;">2017-07-15</span>
<span style="top:501px;right:217.50px;">1 501</span>
<span style="top:501px;right:154.01px;letter-spacing:-0.510px;">180</span>
<span style="top:501px;right:84.50px;">3</span>
<span style="top:501px;left:1209.3px;letter-spacing:-0.394px;">INR</span>
<span style="top:521px;left:28.3px;letter-spacing:-0.070px;">Christiansen LLC</span>
<span style="top:521px;left:273.3px;letter-spacing:-0.055px;">Jaime Feil</span>
<span style="top:521px;left:403.3px;letter-spacing:0.402px;">jaime.feil@somecompany.biz</span>
<span style="top:521px;left:656.3px;letter-spacing:0.187px;">Heard Island and McDonald Islands</span>
<span style="top:521px;right:317.95px;letter-spacing:-0.446px;">2017-07-08</span>
<span style="top:521px;right:218.01px;letter-spacing:-0.510px;">601</span>
<span style="top:521px;right:154.02px;letter-spacing:-0.516px;">72</span>
<span style="top:521px;right:84.50px;">3</span>
<span style="top:521px;left:1209.3px;letter-spacing:-0.740px;">USD</span>
</div>
</body></html>
